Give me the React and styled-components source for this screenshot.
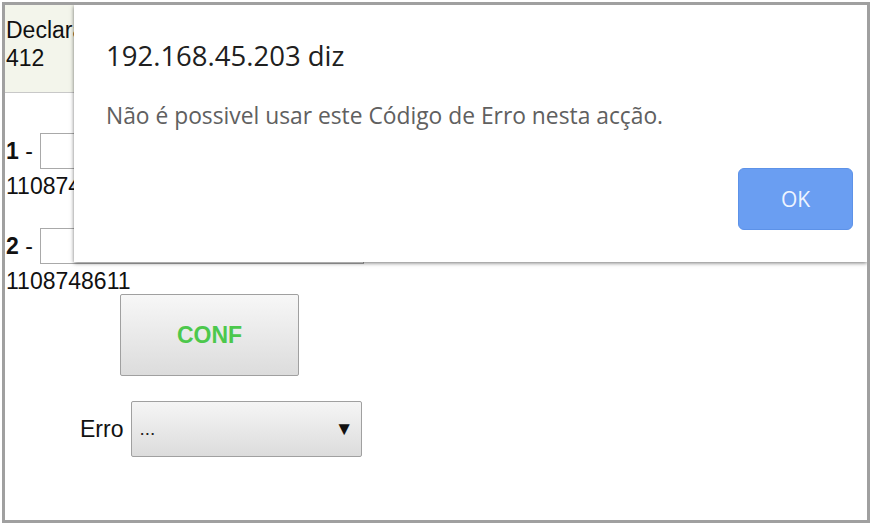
import styled, { createGlobalStyle } from "styled-components"

const Global = createGlobalStyle`
  html, body {
    margin: 0;
    padding: 0;
    background: #ffffff;
  }
`

// moldura cinzenta da página
const Moldura = styled.div`
  position: relative;
  margin: 2px;
  width: 862px;
  height: 515px;
  border: 3px solid #a0a0a0;
  overflow: hidden;
  background: #ffffff;
  font-family: "Liberation Sans", Arial, sans-serif;
  font-size: 23px;
  color: #111;
`

const Cabecalho = styled.div`
  height: 76px;
  padding: 11px 0 0 1px;
  line-height: 28px;
  background: #f3f5eb;
  border-bottom: 1px solid #c8c8c8;
`

const Corpo = styled.div`
  padding-left: 1px;
`

const Linha = styled.div`
  display: flex;
  align-items: center;
  margin-top: ${(p) => p.$topo}px;
`

const Rotulo = styled.span`
  white-space: nowrap;
`

const Campo = styled.input`
  box-sizing: border-box;
  width: 324px;
  height: 36px;
  margin: 0 0 0 7px;
  border: 1px solid #a9a9a9;
  background: #fff;
  font-size: 20px;
`

const Numero = styled.div`
  margin-top: 4px;
  line-height: 26px;
`

const BotaoConf = styled.button`
  display: block;
  box-sizing: border-box;
  width: 179px;
  height: 82px;
  margin-left: 114px;
  border: 1px solid #a0a0a0;
  border-radius: 2px;
  background: linear-gradient(#f7f7f7, #dcdcdc);
  font-family: "Liberation Sans", Arial, sans-serif;
  font-size: 23px;
  font-weight: bold;
  color: #4cc84c;
`

const RotuloErro = styled.span`
  margin-left: 74px;
`

const Seletor = styled.div`
  box-sizing: border-box;
  display: flex;
  align-items: center;
  justify-content: space-between;
  width: 231px;
  height: 56px;
  margin-left: 8px;
  padding: 0 8px 0 7px;
  border: 1px solid #a0a0a0;
  border-radius: 2px;
  background: linear-gradient(#f5f5f5, #dcdcdc);
  font-size: 19px;
  color: #222;
`

const Seta = styled.span`
  font-size: 19px;
  color: #111;
`

// janela de alerta do navegador
const Alerta = styled.div`
  position: absolute;
  top: 0;
  left: 69px;
  right: 0;
  height: 257px;
  box-sizing: border-box;
  padding: 35px 14px 0 32px;
  background: #ffffff;
  box-shadow: 0 1px 4px rgba(0, 0, 0, 0.55);
  font-family: "Open Sans", "Noto Sans", sans-serif;
`

const Titulo = styled.div`
  font-size: 27.5px;
  line-height: 32px;
  color: #202020;
`

const Mensagem = styled.div`
  margin-top: 30px;
  font-size: 22.8px;
  line-height: 28px;
  color: #606060;
`

const Rodape = styled.div`
  display: flex;
  justify-content: flex-end;
  margin-top: 38px;
`

const BotaoOk = styled.button`
  width: 115px;
  height: 62px;
  border: 1px solid #5d92e8;
  border-radius: 6px;
  background: #6a9ef2;
  font-family: "Open Sans", "Noto Sans", sans-serif;
  font-size: 21px;
  color: #eef4ff;
`

export default function App() {
  return (
    <>
      <Global />
      <Moldura>
        <Cabecalho>
          Declaração
          <br />
          412
        </Cabecalho>

        <Corpo>
          <Linha $topo={40}>
            <Rotulo><b>1</b> -</Rotulo>
            <Campo type="text" />
          </Linha>
          <Numero>1108748610</Numero>

          <Linha $topo={29}>
            <Rotulo><b>2</b> -</Rotulo>
            <Campo type="text" />
          </Linha>
          <Numero>1108748611</Numero>

          <BotaoConf>CONF</BotaoConf>

          <Linha $topo={25}>
            <RotuloErro>Erro</RotuloErro>
            <Seletor>
              <span>...</span>
              <Seta>▼</Seta>
            </Seletor>
          </Linha>
        </Corpo>

        <Alerta>
          <Titulo>192.168.45.203 diz</Titulo>
          <Mensagem>Não é possivel usar este Código de Erro nesta acção.</Mensagem>
          <Rodape>
            <BotaoOk>OK</BotaoOk>
          </Rodape>
        </Alerta>
      </Moldura>
    </>
  )
}
